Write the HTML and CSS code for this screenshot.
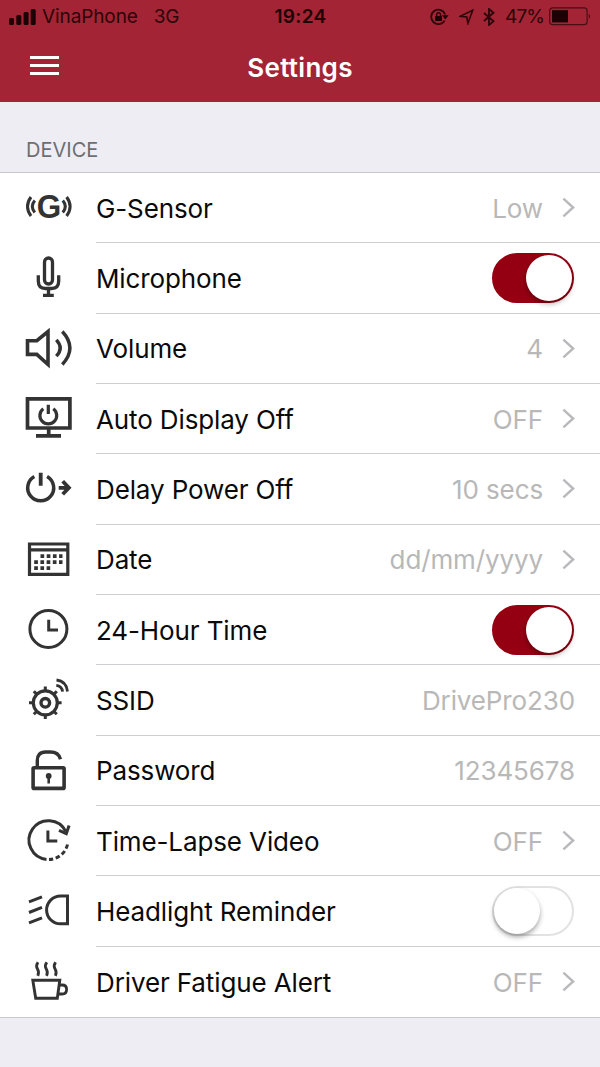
FILE: index.html
```html
<!DOCTYPE html>
<html lang="en">
<head>
<meta charset="UTF-8">
<meta name="viewport" content="width=device-width, initial-scale=1.0">
<title>Settings</title>
<link rel="stylesheet" href="styles.css">
</head>
<body>

<header class="header">
    <div class="status-bar">
        <div class="status-left">
            <svg class="signal" width="27" height="16" viewBox="0 0 27 16">
                <rect x="0" y="9" width="5" height="7" rx="1.5"/>
                <rect x="7.3" y="6" width="5" height="10" rx="1.5"/>
                <rect x="14.6" y="3" width="5" height="13" rx="1.5"/>
                <rect x="21.7" y="0" width="5" height="16" rx="1.5"/>
            </svg>
            <span class="carrier">VinaPhone</span>
            <span class="network">3G</span>
        </div>
        <div class="time">19:24</div>
        <div class="status-right">
            <svg class="rotation" width="19" height="18" viewBox="0 0 19 18">
                <path d="M14.6 12.6A7.2 7.2 0 1 1 15.2 6.5" fill="none" stroke="currentColor" stroke-width="1.8"/>
                <path d="M12 7.2h6.6l-3.3 4.2z"/>
                <rect x="5.2" y="8" width="6.8" height="5" rx=".6"/>
                <path d="M6.7 8.3V6.6a1.9 1.9 0 0 1 3.8 0v1.7" fill="none" stroke="currentColor" stroke-width="1.4"/>
            </svg>
            <svg class="location" width="15" height="16" viewBox="0 0 15 16">
                <path d="M1 7.4L13.7 1.2 8.9 14.3 7.8 8z" fill="none" stroke="currentColor" stroke-width="1.6"/>
            </svg>
            <svg class="bluetooth" width="12" height="18" viewBox="0 0 12 18">
                <path d="M1 5l9.5 8.3L6 17V1l4.5 3.7L1 13" fill="none" stroke="currentColor" stroke-width="1.8"/>
            </svg>
            <span class="percent">47%</span>
            <svg class="battery" width="42" height="19" viewBox="0 0 42 19">
                <rect x=".7" y=".9" width="37.4" height="16.8" rx="3" fill="none" stroke="currentColor" stroke-width="1.2" opacity=".75"/>
                <rect x="3" y="3.2" width="16" height="12.2"/>
                <path d="M39.8 6.5q2.4 2.8 0 5.6z" opacity=".75"/>
            </svg>
        </div>
    </div>
    <div class="nav-bar">
        <div class="menu">
            <span></span>
            <span></span>
            <span></span>
        </div>
        <h1 class="title">Settings</h1>
    </div>
</header>

<h2 class="section-title">DEVICE</h2>

<div class="list">
    <div class="row">
        <svg class="icon" viewBox="0 0 48 48">
            <text class="icon-letter" x="12.700" y="33.700" textLength="24.500" lengthAdjust="spacingAndGlyphs">G</text>
            <path d="M7 13q-7 9.500 0 19M10.800 16.500q-5 6 0 12M42.600 13q7 9.500 0 19M38.800 16.500q5 6 0 12"/>
        </svg>
        <div class="cell">
            <span class="label">G-Sensor</span>
            <span class="value">Low</span>
            <svg class="chevron" viewBox="0 0 14 22"><path d="M1.5 1.5L12 11 1.5 20.5"/></svg>
        </div>
    </div>
    <div class="row">
        <svg class="icon" viewBox="0 0 48 48">
            <rect x="20.5" y="4" width="8" height="26" rx="4" stroke-width="3.3"/>
            <path d="M14.3 21.2V27q0 7.500 7.200 7.500h6q7.200 0 7.200-7.500V21.200M24.500 34.500v7M19 41.300h10.800" stroke-width="3.300"/>
        </svg>
        <div class="cell">
            <span class="label">Microphone</span>
            <div class="toggle on"><div class="knob"></div></div>
        </div>
    </div>
    <div class="row">
        <svg class="icon" viewBox="0 0 48 48">
            <path d="M3.5 15.7h9.300L24 6.500v33L12.800 29.400H3.500z" stroke-width="3.600"/>
            <path d="M32.300 14.800q7.800 8.200 0 16.400M38.300 6.500q15.200 16.500 0 33" stroke-width="3.400"/>
        </svg>
        <div class="cell">
            <span class="label">Volume</span>
            <span class="value">4</span>
            <svg class="chevron" viewBox="0 0 14 22"><path d="M1.5 1.5L12 11 1.5 20.5"/></svg>
        </div>
    </div>
    <div class="row">
        <svg class="icon" viewBox="0 0 48 48">
            <path d="M3.5 3.9h42.400V33H3.500zM24.700 33v7M12 40.800h25" stroke-width="3.700"/>
            <path d="M19.300 13.800a8.400 8.400 0 1 0 10 0M24.300 9.800v9.200" stroke-width="3.200"/>
        </svg>
        <div class="cell">
            <span class="label">Auto Display Off</span>
            <span class="value">OFF</span>
            <svg class="chevron" viewBox="0 0 14 22"><path d="M1.5 1.5L12 11 1.5 20.5"/></svg>
        </div>
    </div>
    <div class="row">
        <svg class="icon" viewBox="0 0 48 48">
            <path d="M10.300 11.500a13 13 0 1 0 12.800 0" stroke-width="3.500"/>
            <path d="M16.700 7.800v13M34.700 22.800h10M38.700 16.300l6.200 6.500-6.200 6.500" stroke-width="3.800"/>
        </svg>
        <div class="cell">
            <span class="label">Delay Power Off</span>
            <span class="value">10 secs</span>
            <svg class="chevron" viewBox="0 0 14 22"><path d="M1.5 1.5L12 11 1.5 20.5"/></svg>
        </div>
    </div>
    <div class="row">
        <svg class="icon" viewBox="0 0 48 48">
            <path d="M5.500 8h38.300v30.300H5.500zM5.500 13.900h38.300" stroke-width="3.200"/>
            <path d="M16.500 20.200h22M10.200 26.200h28.300M10.200 32.200h16" stroke-width="3.700" stroke-dasharray="3.700 2.500"/>
        </svg>
        <div class="cell">
            <span class="label">Date</span>
            <span class="value">dd/mm/yyyy</span>
            <svg class="chevron" viewBox="0 0 14 22"><path d="M1.5 1.5L12 11 1.5 20.5"/></svg>
        </div>
    </div>
    <div class="row">
        <svg class="icon" viewBox="0 0 48 48">
            <circle cx="24.400" cy="22.900" r="18.500"/>
            <path d="M24.700 13.800v10.300H34"/>
        </svg>
        <div class="cell">
            <span class="label">24-Hour Time</span>
            <div class="toggle on"><div class="knob"></div></div>
        </div>
    </div>
    <div class="row">
        <svg class="icon" viewBox="0 0 48 48">
            <circle cx="21.300" cy="26.800" r="12" stroke-width="3.200"/>
            <circle cx="21.300" cy="26.800" r="4.300" stroke-width="3.400"/>
            <path d="M21.300 14.500v-4M21.300 39.100v4M9 26.800H5M33.600 26.800h4M12.600 18.100l-2.800-2.800M30 18.100l2.800-2.800M12.600 35.500l-2.800 2.800M30 35.500l2.800 2.800"/>
            <path d="M32.500 4q10 1.200 11 11.500M32.300 9.300q5.500.700 6.300 6.300" stroke-width="2.800"/>
        </svg>
        <div class="cell">
            <span class="label">SSID</span>
            <span class="value">DrivePro230</span>
        </div>
    </div>
    <div class="row">
        <svg class="icon" viewBox="0 0 48 48">
            <rect x="9.100" y="20.700" width="31" height="20.700" rx="1" stroke-width="3.600"/>
            <path d="M13.300 20V13.500Q13.300 5 21.500 5h5q8 0 10 7.200" stroke-width="3.400"/>
            <circle class="fill" cx="24.700" cy="28.900" r="2.900"/>
            <path d="M24.700 29v7.500" stroke-width="2.600"/>
        </svg>
        <div class="cell">
            <span class="label">Password</span>
            <span class="value">12345678</span>
        </div>
    </div>
    <div class="row">
        <svg class="icon" viewBox="0 0 48 48">
            <path d="M22.500 42.400A19.400 19.400 0 1 1 41.800 14.500"/>
            <path d="M43.500 27.500A19.400 19.400 0 0 1 25 42.500" stroke-dasharray="4.500 2.600"/>
            <path d="M35 13.400l7.300 3.300 2.800-8.200M23.900 13.500v10.600h9.400"/>
        </svg>
        <div class="cell">
            <span class="label">Time-Lapse Video</span>
            <span class="value">OFF</span>
            <svg class="chevron" viewBox="0 0 14 22"><path d="M1.5 1.5L12 11 1.5 20.5"/></svg>
        </div>
    </div>
    <div class="row">
        <svg class="icon" viewBox="0 0 48 48">
            <path d="M43.500 9H36.500A13.900 13.900 0 0 0 36.500 36.800H43.500zM5 14.800l13-5M5 25.500l13-5.200M5 35.800l13-5"/>
        </svg>
        <div class="cell">
            <span class="label">Headlight Reminder</span>
            <div class="toggle"><div class="knob"></div></div>
        </div>
    </div>
    <div class="row">
        <svg class="icon" viewBox="0 0 48 48">
            <path d="M8.800 22.300h27L33.300 40.200H11.700z" stroke-width="2.900"/>
            <path d="M35.500 27h2.700q4.400 0 4.400 4.500t-4.400 4.500h-4M14 4.300q-2.500 3.500-.5 6.800t.3 6.800M22.800 4.300q-2.500 3.500-.5 6.800t.3 6.800M31.600 4.300q-2.500 3.500-.5 6.800t.3 6.800" stroke-width="2.800"/>
        </svg>
        <div class="cell">
            <span class="label">Driver Fatigue Alert</span>
            <span class="value">OFF</span>
            <svg class="chevron" viewBox="0 0 14 22"><path d="M1.5 1.5L12 11 1.5 20.5"/></svg>
        </div>
    </div>
</div>

</body>
</html>
```
FILE: styles.css
```css
* {
    box-sizing: border-box;
}

body {
    margin: 0;
    background-color: #eeedf3;
    color: #0a0a0a;
    font-family: Inter, "Liberation Sans", sans-serif;
    overflow: hidden;
}

/* Header */
.header {
    height: 102px;
    background-color: #a32434;
}

.status-bar {
    display: grid;
    grid-template-columns: 1fr auto 1fr;
    align-items: center;
    height: 33px;
    padding: 0 9px;
    color: #2b0509;
    font-size: 19px;
    line-height: 33px;
}

.status-bar svg {
    fill: #1c0205;
}

.status-left,
.status-right {
    display: flex;
    align-items: center;
}

.status-right {
    justify-content: flex-end;
}

.carrier {
    margin-left: 6px;
    letter-spacing: -0.1px;
}

.network {
    margin-left: 16px;
    letter-spacing: -0.3px;
}

.time {
    padding-left: 1px;
    font-weight: 600;
    color: #1c0205;
    letter-spacing: 0.3px;
}

.location {
    margin-left: 10px;
}

.bluetooth {
    margin-left: 9px;
}

.percent {
    margin-left: 10px;
    letter-spacing: -0.9px;
}

.battery {
    margin-left: 5px;
}

.nav-bar {
    display: grid;
    grid-template-columns: 60px 1fr 60px;
    align-items: center;
    height: 68px;
}

.menu {
    display: flex;
    flex-direction: column;
    gap: 5px;
    width: 59px;
    padding: 0 0 3px 30px;
}

.menu span {
    height: 3px;
    background-color: #ffffff;
}

.title {
    margin: 0;
    color: #ffffff;
    font-size: 26px;
    font-weight: 600;
    letter-spacing: 0.3px;
    text-align: center;
}

/* Section */
.section-title {
    height: 70px;
    margin: 0;
    padding: 36px 26px 0;
    color: #6d6d72;
    font-size: 20px;
    font-weight: 400;
    line-height: 24px;
}

.list {
    display: grid;
    grid-template-rows: repeat(12, 1fr);
    height: 846px;
    border-top: 1px solid #c8c7cc;
    border-bottom: 1px solid #c8c7cc;
    background-color: #ffffff;
}

.row {
    display: flex;
    align-items: center;
    padding-left: 24px;
}

.icon {
    flex: none;
    width: 48px;
    height: 48px;
    margin-right: 24px;
    fill: none;
    stroke: #333333;
    stroke-width: 3;
}

.icon .fill,
.icon-letter {
    fill: #333333;
    stroke: none;
}

.icon-letter {
    font-family: "Liberation Sans", Arial, sans-serif;
    font-size: 34px;
    font-weight: 700;
}

.cell {
    display: flex;
    flex: 1;
    align-items: center;
    height: 100%;
    padding-right: 25px;
    border-bottom: 1px solid #cfced3;
}

.row:last-child .cell {
    border-bottom: none;
}

.label,
.value {
    padding-top: 1px;
    font-size: 26px;
    letter-spacing: -0.12px;
    white-space: nowrap;
}

.label {
    flex: 1;
}

.value {
    color: #b8b8b8;
}

.chevron {
    width: 13px;
    height: 21px;
    margin-left: 19px;
    fill: none;
    stroke: #b9b9bd;
    stroke-width: 2.6;
}

/* Switch */
.toggle {
    width: 82px;
    height: 50px;
    margin-right: 1px;
    border: 2px solid #e2e2e2;
    border-radius: 25px;
    background-color: #ffffff;
}

.toggle .knob {
    width: 46px;
    height: 46px;
    border-radius: 50%;
    background-color: #ffffff;
    box-shadow: 0 3px 5px rgba(0, 0, 0, 0.35);
}

.toggle.on {
    border-color: #940012;
    background-color: #940012;
}

.toggle.on .knob {
    margin-left: 32px;
    box-shadow: 0 3px 5px rgba(0, 0, 0, 0.3);
}
```
